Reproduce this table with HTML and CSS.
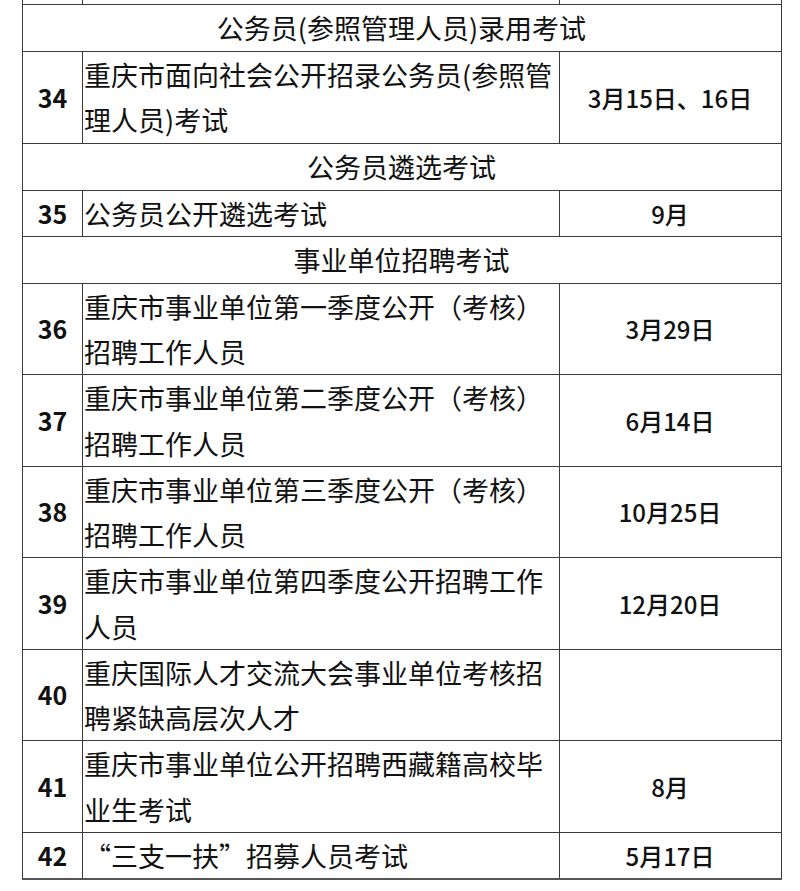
FILE: index.html
```html
<!DOCTYPE html>
<html lang="zh-CN">
<head>
<meta charset="utf-8">
<title>考试安排</title>
<link rel="stylesheet" href="styles.css">
</head>
<body>
<table class="exam">
  <colgroup>
    <col class="c-no">
    <col class="c-name">
    <col class="c-date">
  </colgroup>
  <tbody>
    <tr class="cut"><td></td><td></td><td></td></tr>
    <tr class="sec"><td colspan="3">公务员(参照管理人员)录用考试</td></tr>
    <tr><td class="no">34</td><td class="name">重庆市面向社会公开招录公务员(参照管理人员)考试</td><td class="date">3月15日、16日</td></tr>
    <tr class="sec"><td colspan="3">公务员遴选考试</td></tr>
    <tr><td class="no">35</td><td class="name">公务员公开遴选考试</td><td class="date">9月</td></tr>
    <tr class="sec"><td colspan="3">事业单位招聘考试</td></tr>
    <tr><td class="no">36</td><td class="name">重庆市事业单位第一季度公开（考核）招聘工作人员</td><td class="date">3月29日</td></tr>
    <tr><td class="no">37</td><td class="name">重庆市事业单位第二季度公开（考核）招聘工作人员</td><td class="date">6月14日</td></tr>
    <tr><td class="no">38</td><td class="name">重庆市事业单位第三季度公开（考核）招聘工作人员</td><td class="date">10月25日</td></tr>
    <tr><td class="no">39</td><td class="name">重庆市事业单位第四季度公开招聘工作人员</td><td class="date">12月20日</td></tr>
    <tr><td class="no">40</td><td class="name">重庆国际人才交流大会事业单位考核招聘紧缺高层次人才</td><td class="date"></td></tr>
    <tr><td class="no">41</td><td class="name">重庆市事业单位公开招聘西藏籍高校毕业生考试</td><td class="date">8月</td></tr>
    <tr class="last"><td class="no">42</td><td class="name">“三支一扶”招募人员考试</td><td class="date">5月17日</td></tr>
  </tbody>
</table>
</body>
</html>
```
FILE: styles.css
```css
html, body {
  margin: 0;
  padding: 0;
  background: #fff;
}
body {
  font-family: "Noto Sans CJK SC", "Noto Sans", sans-serif;
  color: #111;
}
.exam {
  border-collapse: collapse;
  margin-left: 22px;
  table-layout: fixed;
  width: 759px;
}
.c-no { width: 60px; }
.c-name { width: 477px; }
.c-date { width: 222px; }
.exam td {
  border: 1px solid #3a3a3a;
  padding: 0 2px 0 1px;
  font-size: 27px;
  line-height: 45.25px;
  vertical-align: middle;
}
.exam tr.cut td {
  border-top: none;
  height: 4px;
  line-height: 4px;
  padding: 0;
}
.exam tr.sec td {
  text-align: center;
  line-height: 46px;
}
.exam td.no {
  text-align: center;
  font-size: 25px;
  font-weight: 600;
  padding: 0;
}
.exam td.date {
  text-align: center;
  font-size: 24px;
  font-weight: 500;
}
.exam tr.last td {
  border-bottom: 2px solid #555;
}
```
